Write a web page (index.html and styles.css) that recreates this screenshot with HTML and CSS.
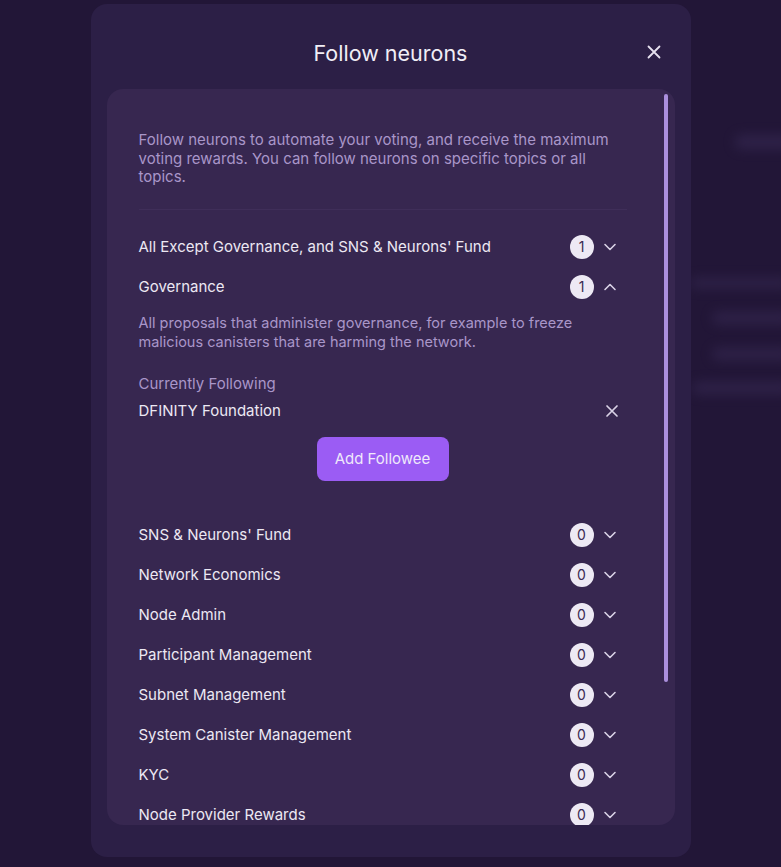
FILE: index.html
```html
<!DOCTYPE html>
<html>
<head>
<meta charset="utf-8">
<link rel="stylesheet" href="styles.css">
</head>
<body>
<div class="backdrop">
  <div class="blob b1"></div>
  <div class="blob b2"></div>
  <div class="blob b3"></div>
  <div class="blob b4"></div>
  <div class="blob b5"></div>
</div>
<div class="modal">
  <header class="modal-head">
    <h1 class="title">Follow neurons</h1>
    <button class="close" aria-label="Close">
      <svg width="16" height="16" viewBox="0 0 16 16"><path d="M2.5 2.5 L13.5 13.5 M13.5 2.5 L2.5 13.5" stroke="#e6e1ef" stroke-width="1.8" stroke-linecap="round"/></svg>
    </button>
  </header>
  <div class="card">
    <div class="scroll-thumb"></div>
    <div class="card-inner">
      <p class="intro">Follow neurons to automate your voting, and receive the maximum voting rewards. You can follow neurons on specific topics or all topics.</p>
      <div class="sep"></div>

      <div class="topic">
        <span class="topic-name">All Except Governance, and SNS &amp; Neurons' Fund</span>
        <span class="badge">1</span>
        <svg class="chev" width="14" height="14" viewBox="0 0 14 14"><path d="M2 4.5 L7 9.5 L12 4.5" fill="none" stroke="#d9d2e6" stroke-width="1.6" stroke-linecap="round" stroke-linejoin="round"/></svg>
      </div>

      <div class="topic">
        <span class="topic-name">Governance</span>
        <span class="badge">1</span>
        <svg class="chev" width="14" height="14" viewBox="0 0 14 14"><path d="M2 9.5 L7 4.5 L12 9.5" fill="none" stroke="#d9d2e6" stroke-width="1.6" stroke-linecap="round" stroke-linejoin="round"/></svg>
      </div>
      <div class="expanded">
        <p class="topic-desc">All proposals that administer governance, for example to freeze malicious canisters that are harming the network.</p>
        <div class="following-label">Currently Following</div>
        <div class="followee">
          <span>DFINITY Foundation</span>
          <svg class="remove" width="14" height="14" viewBox="0 0 14 14"><path d="M2 2 L12 12 M12 2 L2 12" stroke="#d9d2e6" stroke-width="1.7" stroke-linecap="round"/></svg>
        </div>
        <div class="btn-row"><button class="primary">Add Followee</button></div>
      </div>

      <div class="topic">
        <span class="topic-name">SNS &amp; Neurons' Fund</span>
        <span class="badge">0</span>
        <svg class="chev" width="14" height="14" viewBox="0 0 14 14"><path d="M2 4.5 L7 9.5 L12 4.5" fill="none" stroke="#d9d2e6" stroke-width="1.6" stroke-linecap="round" stroke-linejoin="round"/></svg>
      </div>
      <div class="topic">
        <span class="topic-name">Network Economics</span>
        <span class="badge">0</span>
        <svg class="chev" width="14" height="14" viewBox="0 0 14 14"><path d="M2 4.5 L7 9.5 L12 4.5" fill="none" stroke="#d9d2e6" stroke-width="1.6" stroke-linecap="round" stroke-linejoin="round"/></svg>
      </div>
      <div class="topic">
        <span class="topic-name">Node Admin</span>
        <span class="badge">0</span>
        <svg class="chev" width="14" height="14" viewBox="0 0 14 14"><path d="M2 4.5 L7 9.5 L12 4.5" fill="none" stroke="#d9d2e6" stroke-width="1.6" stroke-linecap="round" stroke-linejoin="round"/></svg>
      </div>
      <div class="topic">
        <span class="topic-name">Participant Management</span>
        <span class="badge">0</span>
        <svg class="chev" width="14" height="14" viewBox="0 0 14 14"><path d="M2 4.5 L7 9.5 L12 4.5" fill="none" stroke="#d9d2e6" stroke-width="1.6" stroke-linecap="round" stroke-linejoin="round"/></svg>
      </div>
      <div class="topic">
        <span class="topic-name">Subnet Management</span>
        <span class="badge">0</span>
        <svg class="chev" width="14" height="14" viewBox="0 0 14 14"><path d="M2 4.5 L7 9.5 L12 4.5" fill="none" stroke="#d9d2e6" stroke-width="1.6" stroke-linecap="round" stroke-linejoin="round"/></svg>
      </div>
      <div class="topic">
        <span class="topic-name">System Canister Management</span>
        <span class="badge">0</span>
        <svg class="chev" width="14" height="14" viewBox="0 0 14 14"><path d="M2 4.5 L7 9.5 L12 4.5" fill="none" stroke="#d9d2e6" stroke-width="1.6" stroke-linecap="round" stroke-linejoin="round"/></svg>
      </div>
      <div class="topic">
        <span class="topic-name">KYC</span>
        <span class="badge">0</span>
        <svg class="chev" width="14" height="14" viewBox="0 0 14 14"><path d="M2 4.5 L7 9.5 L12 4.5" fill="none" stroke="#d9d2e6" stroke-width="1.6" stroke-linecap="round" stroke-linejoin="round"/></svg>
      </div>
      <div class="topic">
        <span class="topic-name">Node Provider Rewards</span>
        <span class="badge">0</span>
        <svg class="chev" width="14" height="14" viewBox="0 0 14 14"><path d="M2 4.5 L7 9.5 L12 4.5" fill="none" stroke="#d9d2e6" stroke-width="1.6" stroke-linecap="round" stroke-linejoin="round"/></svg>
      </div>
    </div>
  </div>
</div>
</body>
</html>
```

FILE: styles.css
```css
* { box-sizing: border-box; }
html, body { margin: 0; padding: 0; }
body {
  width: 781px;
  height: 867px;
  overflow: hidden;
  background: #221637;
  font-family: "Inter", "Noto Sans", sans-serif;
  color: #ece8f3;
  display: flex;
  justify-content: center;
  padding-top: 4px;
}
.backdrop { position: absolute; inset: 0; overflow: hidden; }
.blob { position: absolute; background: #32254d; filter: blur(6px); border-radius: 6px; opacity: 0.8; }
.b1 { left: 735px; top: 135px; width: 60px; height: 14px; }
.b2 { left: 690px; top: 278px; width: 100px; height: 10px; }
.b3 { left: 712px; top: 312px; width: 80px; height: 12px; }
.b4 { left: 712px; top: 348px; width: 80px; height: 12px; }
.b5 { left: 692px; top: 382px; width: 100px; height: 12px; }

.modal {
  position: relative;
  width: 600px;
  height: 853px;
  background: #2c1f46;
  border-radius: 16px;
  padding: 0 16px 32px;
  display: flex;
  flex-direction: column;
}
.modal-head {
  height: 85px;
  display: flex;
  align-items: center;
  justify-content: center;
  position: relative;
}
.title {
  margin: 0;
  font-size: 21.5px;
  font-weight: 400;
  color: #f1eef6;
  margin-top: 12px;
}
.close {
  position: absolute;
  right: 13px;
  top: 40px;
  background: none;
  border: 0;
  padding: 0;
  width: 16px;
  height: 16px;
  display: flex;
}
.card {
  position: relative;
  flex: 1;
  background: #372750;
  border-radius: 16px;
  overflow: hidden;
}
.scroll-thumb {
  position: absolute;
  right: 7px;
  top: 5px;
  width: 4px;
  height: 588px;
  border-radius: 2px;
  background: #ab8fdd;
}
.card-inner {
  padding: 42px 48px 0 32px;
}
.intro {
  margin: 0;
  font-size: 15px;
  line-height: 18.5px;
  color: #a996c9;
}
.sep {
  height: 1px;
  background: #3f2e59;
  margin: 22px 0 17px 0;
}
.topic {
  height: 40px;
  display: flex;
  align-items: center;
  font-size: 15px;
  color: #ece8f3;
}
.topic-name { flex: 1; }
.badge {
  width: 24px;
  height: 24px;
  border-radius: 50%;
  background: #ede9f4;
  color: #3a2a52;
  font-size: 14px;
  display: flex;
  align-items: center;
  justify-content: center;
}
.chev { margin-left: 9px; margin-right: 10px; }
.expanded { padding-bottom: 34px; }
.topic-desc {
  margin: 0;
  padding-top: 6px;
  font-size: 14.5px;
  line-height: 19px;
  color: #a996c9;
}
.following-label {
  margin-top: 23px;
  font-size: 15px;
  color: #a996c9;
  line-height: 20px;
}
.followee {
  margin-top: 7px;
  display: flex;
  align-items: center;
  justify-content: space-between;
  font-size: 15px;
  color: #ece8f3;
  line-height: 20px;
}
.remove { margin-right: 8px; }
.btn-row { display: flex; justify-content: center; margin-top: 16px; }
.primary {
  width: 132px;
  height: 44px;
  border: 0;
  border-radius: 8px;
  background: #9b5cf4;
  color: #efe8fb;
  font-family: inherit;
  font-size: 15px;
}
```
